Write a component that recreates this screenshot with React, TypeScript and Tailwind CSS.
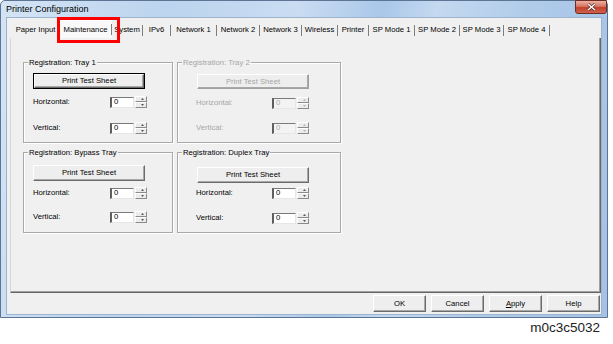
import React from "react";

const FONT = "font-['Liberation_Sans',Arial,sans-serif]";

function Spinner({ disabled }: { disabled?: boolean }) {
  const c = disabled ? "#b8b8b8" : "#5a5a5a";
  const half =
    "flex-1 flex items-center justify-end pr-[2px] bg-[#ececec] border border-t-white border-l-white border-r-[#8a8a8a] border-b-[#8a8a8a]";
  return (
    <div className="flex flex-col w-[12px] h-[12px]">
      <div className={half}>
        <svg width="3" height="2" viewBox="0 0 3 2">
          <path d="M1.5 0 L3 2 L0 2Z" fill={c} />
        </svg>
      </div>
      <div className={half}>
        <svg width="3" height="2" viewBox="0 0 3 2">
          <path d="M0 0 L3 0 L1.5 2Z" fill={c} />
        </svg>
      </div>
    </div>
  );
}

function Field({ disabled }: { disabled?: boolean }) {
  return (
    <div className="flex items-center gap-[1px]">
      <div
        className={`w-[24px] h-[11px] border-2 border-t-[#7a7a7a] border-l-[#5e5e5e] border-r-[#e6e6e6] border-b-[#e6e6e6] border-r-[1px] border-b-[1px] border-t-[1px] flex items-center pl-[2px] text-[7.7px] leading-none ${
          disabled ? "bg-[#f3f3f3] text-[#a8a8a8]" : "bg-white text-black"
        }`}
      >
        0
      </div>
      <Spinner disabled={disabled} />
    </div>
  );
}

function Btn({
  children,
  cls,
  def,
  disabled,
}: {
  children: React.ReactNode;
  cls: string;
  def?: boolean;
  disabled?: boolean;
}) {
  const inner = (
    <div
      className={`h-full flex items-center justify-center bg-[#eeeeee] border border-t-white border-l-white border-r-[#6b6b6b] border-b-[#6b6b6b] shadow-[inset_-1px_-1px_0_#a8a8a8] text-[7.7px] leading-none ${
        disabled ? "text-[#a6a6a6] border-r-[#a0a0a0] border-b-[#a0a0a0]" : "text-black"
      }`}
    >
      {children}
    </div>
  );
  if (def) return <div className={`border border-black ${cls}`}>{inner}</div>;
  return <div className={cls}>{inner}</div>;
}

function Row({
  label,
  cls,
  disabled,
  right,
}: {
  label: string;
  cls: string;
  disabled?: boolean;
  right?: boolean;
}) {
  return (
    <div className={`flex items-center ${cls}`}>
      <div
        className={`${right ? "w-[76px]" : "w-[77px]"} text-[7.7px] leading-none ${
          disabled ? "text-[#a6a6a6]" : "text-black"
        }`}
      >
        {label}
      </div>
      <Field disabled={disabled} />
    </div>
  );
}

function Group({
  title,
  right,
  disabled,
  def,
  btnCls,
  r1Cls,
  r2Cls,
}: {
  title: string;
  right?: boolean;
  disabled?: boolean;
  def?: boolean;
  btnCls: string;
  r1Cls: string;
  r2Cls: string;
}) {
  return (
    <div
      className={`relative h-[81px] border border-[#a9a9a9] shadow-[1px_1px_0_#ffffff,inset_1px_1px_0_#ffffff] flex flex-col ${
        right ? "pl-[18px]" : "pl-[9px]"
      }`}
    >
      <span
        className={`absolute left-[4px] top-[-5px] px-[1px] bg-[#f0f0f0] text-[7.7px] leading-[9px] ${
          disabled ? "text-[#a6a6a6]" : "text-black"
        }`}
      >
        {title}
      </span>
      <Btn
        cls={`${btnCls} w-[112px] ${right ? "ml-[1px]" : ""}`}
        def={def}
        disabled={disabled}
      >
        Print Test Sheet
      </Btn>
      <Row label="Horizontal:" cls={r1Cls} disabled={disabled} right={right} />
      <Row label="Vertical:" cls={r2Cls} disabled={disabled} right={right} />
    </div>
  );
}

const tabs: { t: string; w: string; sel?: boolean }[] = [
  { t: "Paper Input", w: "w-[46px]" },
  { t: "Maintenance", w: "w-[53px]", sel: true },
  { t: "System", w: "w-[31px]" },
  { t: "IPv6", w: "w-[28px]" },
  { t: "Network 1", w: "w-[46px]" },
  { t: "Network 2", w: "w-[43px]" },
  { t: "Network 3", w: "w-[42px]" },
  { t: "Wireless", w: "w-[36px]" },
  { t: "Printer", w: "w-[31px]" },
  { t: "SP Mode 1", w: "w-[46px]" },
  { t: "SP Mode 2", w: "w-[45px]" },
  { t: "SP Mode 3", w: "w-[44px]" },
  { t: "SP Mode 4", w: "w-[46px]" },
];

export default function App() {
  return (
    <div className={`relative w-[613px] h-[344px] bg-white overflow-hidden ${FONT}`}>
      {/* window */}
      <div className="w-[608px] h-[318px] border border-[#5d7592] rounded-t-[5px] bg-[linear-gradient(100deg,#d4e4f5_0%,#bcd4ee_25%,#c9dcf2_45%,#aac7e9_58%,#c4d9f0_66%,#b0cbea_80%,#a4c2e6_100%)] flex flex-col px-[5px] pb-[2px]">
        {/* title bar */}
        <div className="h-[16px] flex items-center justify-between">
          <span className="text-[9px] leading-none text-black pl-[0px]">Printer Configuration</span>
          <div className="self-start -mt-[1px] -mr-[5px] w-[32px] h-[14px] rounded-b-[3px] border border-[#6e2b22] bg-[linear-gradient(180deg,#eab1a4_0%,#d87562_45%,#c2402c_55%,#d0624c_100%)] flex items-center justify-center">
            <svg width="9" height="8" viewBox="0 0 9 8">
              <path d="M1 1 L8 7 M8 1 L1 7" stroke="#4a1a14" strokeWidth="2.6" />
              <path d="M1 1 L8 7 M8 1 L1 7" stroke="#ffffff" strokeWidth="1.6" />
            </svg>
          </div>
        </div>
        {/* client */}
        <div className="flex-1 bg-[#f0f0f0] border border-[#9db4cf] flex flex-col">
          {/* tab strip */}
          <div className="h-[20px] flex items-end pl-[6px]">
            {tabs.map((tb) => (
              <div
                key={tb.t}
                className={`${tb.w} flex items-center ${
                  tb.sel
                    ? "h-[18px] bg-[#f9f9f9] border-l border-t border-white"
                    : "h-[16px]"
                }`}
              >
                <span className="flex-1 text-center text-[7.7px] leading-none text-black whitespace-nowrap">
                  {tb.t}
                </span>
                <span className="w-px h-[11px] bg-[#7d7d7d]" />
              </div>
            ))}
          </div>
          {/* tab page */}
          <div className="h-[255px] ml-[3px] mr-[0px] border-l border-l-[#d6d6d6] border-r border-r-[#666666] border-b border-b-[#666666] shadow-[inset_-1px_-1px_0_#a0a0a0] pl-[12px] pt-[24px]">
            <div className="grid grid-cols-[150px_164px] gap-x-[4px] gap-y-[9px]">
              <Group
                title="Registration: Tray 1"
                def
                btnCls="mt-[10px] h-[16px]"
                r1Cls="mt-[7px]"
                r2Cls="mt-[14px]"
              />
              <Group
                title="Registration: Tray 2"
                right
                disabled
                btnCls="mt-[11px] h-[15px]"
                r1Cls="mt-[8px]"
                r2Cls="mt-[13px]"
              />
              <Group
                title="Registration: Bypass Tray"
                btnCls="mt-[12px] h-[16px]"
                r1Cls="mt-[6px]"
                r2Cls="mt-[12px]"
              />
              <Group
                title="Registration: Duplex Tray"
                right
                btnCls="mt-[14px] h-[16px]"
                r1Cls="mt-[4px]"
                r2Cls="mt-[13px]"
              />
            </div>
          </div>
          {/* buttons */}
          <div className="flex justify-end gap-[5px] mt-[2px] pr-[1px]">
            <Btn cls="w-[53px] h-[17px]">OK</Btn>
            <Btn cls="w-[53px] h-[17px]">Cancel</Btn>
            <Btn cls="w-[53px] h-[17px]">
              <span>
                <span className="underline">A</span>pply
              </span>
            </Btn>
            <Btn cls="w-[53px] h-[17px]">Help</Btn>
          </div>
        </div>
      </div>
      <div className="mt-[3px] pr-[13px] text-right text-[13.5px] leading-[14px] text-[#222]">m0c3c5032</div>
      {/* annotation */}
      <div className="absolute left-[57px] top-[17px] w-[63px] h-[26px] border-[3px] border-[#ff0000]" />
    </div>
  );
}
